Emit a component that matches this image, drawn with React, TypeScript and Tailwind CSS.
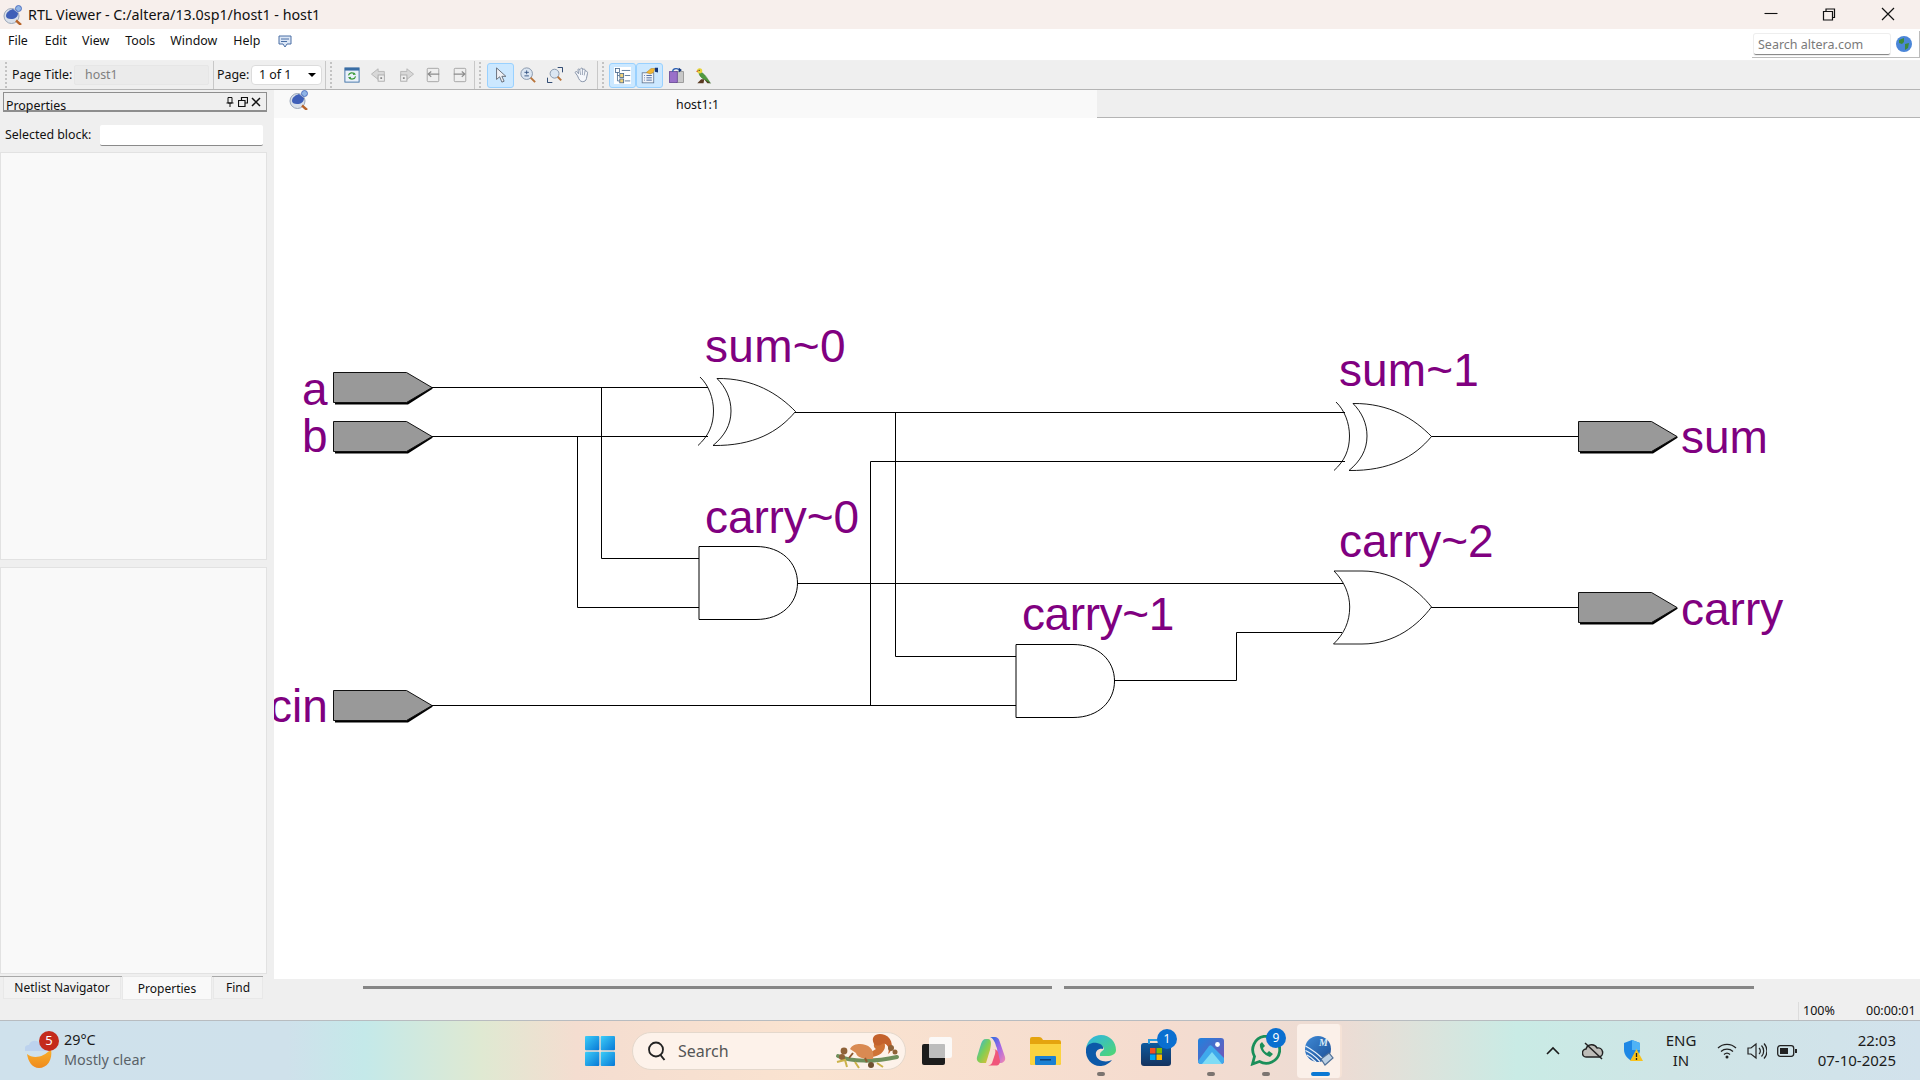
import React from "react";

const P = "#800080";

function Pin({ x, y }: { x: number; y: number }) {
  return (
    <g transform={`translate(${x} ${y})`}>
      <path d="M2 30H74L100 16L98 15L74 28H2V32.5H75L100 16.5Z" fill="#000" />
      <path d="M0.5 0.5H73.5L99 15.5L73.5 30.5H0.5Z" fill="#999" stroke="#111" strokeWidth="1" />
    </g>
  );
}
function Xor({ dx, dy }: { dx: number; dy: number }) {
  return (
    <g transform={`translate(${dx} ${dy})`} fill="none" stroke="#000" strokeWidth="0.9">
      <path d="M671.5 377C680 385 685 398 685 411C685 425 680 436 669.5 445.5" />
      <path d="M688.5 378.5C697 387 702.5 398 702.5 411C702.5 425 696 436 684.5 445.5C725 446 750 432 767 411.5C750 394 725 378 688.5 378.5Z" fill="#fff" />
    </g>
  );
}
function And({ dx, dy }: { dx: number; dy: number }) {
  return (
    <path transform={`translate(${dx} ${dy})`} d="M671 546.5H728C754 546.5 769.5 563 769.5 583C769.5 603 754 619.5 728 619.5H671Z" fill="#fff" stroke="#000" strokeWidth="1" />
  );
}
function Label({ x, y, t, ls = 0 }: { x: number; y: number; t: string; ls?: number }) {
  return (
    <text x={x} y={y} fontFamily="'Liberation Sans', Arial, sans-serif" fontSize="46" fill={P} letterSpacing={ls}>
      {t}
    </text>
  );
}

function Schematic() {
  const wires = [
    "M432 387.5H708", "M432 436.5H708", "M601.5 387.5V558.5H699", "M577.5 436.5V607.5H699",
    "M795 412.5H1345", "M895.5 412.5V656.5H1016", "M870.5 461.5H1345", "M870.5 461.5V705.5",
    "M432 705.5H1016", "M797 583.5H1345", "M1114 680.5H1236.5V632.5H1342", "M1431 436.5H1578", "M1431 607.5H1578",
  ];
  return (
    <svg width="1646" height="861" viewBox="274 118 1646 861" className="block">
      {wires.map((d) => (
        <path key={d} d={d} fill="none" stroke="#000" strokeWidth="1" />
      ))}
      <Pin x={333} y={372} />
      <Pin x={333} y={421} />
      <Pin x={333} y={690} />
      <Pin x={1578} y={421} />
      <Pin x={1578} y={592} />
      <Xor dx={28.5} dy={0} />
      <Xor dx={664.5} dy={25} />
      <And dx={28} dy={0} />
      <And dx={345} dy={98} />
      <path d="M1334 571C1344 581 1349.7 594 1349.7 607C1349.7 622 1344 634 1333.5 644H1362C1395 644 1418 625 1431.5 607C1418 590 1395 571 1362 571Z" fill="#fff" stroke="#000" strokeWidth="0.9" />
      <Label x={705} y={362} t="sum~0" ls={0.3} />
      <Label x={1339} y={386} t="sum~1" ls={0.1} />
      <Label x={705} y={533} t="carry~0" ls={-0.1} />
      <Label x={1339} y={557} t="carry~2" ls={0} />
      <Label x={1022} y={630} t="carry~1" ls={-0.4} />
      <Label x={302} y={405} t="a" />
      <Label x={302} y={452} t="b" />
      <Label x={269} y={722} t="cin" />
      <Label x={1681} y={453} t="sum" />
      <Label x={1681} y={625} t="carry" />
    </svg>
  );
}

function AppIcon({ s = 20 }: { s?: number }) {
  return (
    <svg width={s} height={s} viewBox="0 0 20 20">
      <circle cx="8.5" cy="11" r="7.5" fill="#d9e0ea" stroke="#9aa6b8" />
      <path d="M3 11C3 7 7 5 10 4L15 8C15 12 12 14 8 14C5 14 3 13 3 11Z" fill="#3f5fb8" />
      <circle cx="15.5" cy="3.5" r="3" fill="#8fb4e6" stroke="#3f5fb8" strokeWidth=".8" />
      <path d="M13 15.5L18 20" stroke="#b8642a" strokeWidth="2.4" />
    </svg>
  );
}

function Grip() {
  return (
    <div className="flex w-[4px] flex-col items-center gap-[2px] self-center">
      {[0, 1, 2, 3, 4, 5, 6].map((i) => (
        <div key={i} className="h-[2px] w-[2px] bg-[#c3c3c3]" />
      ))}
    </div>
  );
}
function Divider() {
  return <div className="h-full w-px shrink-0 bg-[#c8c8c8]" />;
}
function Btn({ on, children }: { on?: boolean; children?: React.ReactNode }) {
  return (
    <div className={`flex h-[25px] w-[27px] shrink-0 items-center justify-center rounded-[3px] ${on ? "border border-[#99d1ff] bg-[#cce8ff]" : ""}`}>
      {children}
    </div>
  );
}

function Tool({ k }: { k: string }) {
  const s = { width: 16, height: 16, viewBox: "0 0 18 18" };
  const b = { width: 17, height: 17, viewBox: "0 0 22 22" };
  switch (k) {
    case "refresh":
      return (
        <svg {...s}>
          <rect x="1" y="1" width="16" height="16" fill="#e9f0fa" stroke="#3a6ea5" />
          <rect x="1" y="1" width="16" height="3" fill="#3a6ea5" />
          <path d="M5 9.5A4 4 0 0 1 12 8M13 10.5A4 4 0 0 1 6 12" fill="none" stroke="#3b9a3b" strokeWidth="1.4" />
          <path d="M11 6L13.5 8.5L10 9ZM7 14L4.5 11.5L8 11Z" fill="#3b9a3b" />
        </svg>
      );
    case "back":
      return (
        <svg {...s}>
          <path d="M8 2L0.5 8L8 14V11H15V5H8Z" fill="#d8d8d8" stroke="#b4b4b4" />
          <rect x="8" y="9" width="7" height="7" fill="#efefef" stroke="#aaa" />
          <rect x="10.5" y="11.5" width="2" height="2" fill="#888" />
        </svg>
      );
    case "fwd":
      return (
        <svg {...s}>
          <path d="M10 2L17.5 8L10 14V11H3V5H10Z" fill="#d8d8d8" stroke="#b4b4b4" />
          <rect x="3" y="9" width="7" height="7" fill="#efefef" stroke="#aaa" />
          <rect x="5.5" y="11.5" width="2" height="2" fill="#888" />
        </svg>
      );
    case "pg1":
      return (
        <svg {...s}>
          <rect x="2.5" y="1.5" width="13" height="15" rx="1" fill="#efefef" stroke="#a0a0a0" />
          <path d="M16 8H3.5M7 5L3.5 8L7 11" fill="none" stroke="#8c8c8c" strokeWidth="1.3" />
        </svg>
      );
    case "pg2":
      return (
        <svg {...s}>
          <rect x="2.5" y="1.5" width="13" height="15" rx="1" fill="#efefef" stroke="#a0a0a0" />
          <path d="M2 8H14.5M11 5L14.5 8L11 11" fill="none" stroke="#8c8c8c" strokeWidth="1.3" />
        </svg>
      );
    case "arrow":
      return (
        <svg {...s}>
          <path d="M4 1V14L7.5 11L10 17L12.5 16L10 10.5H14.5Z" fill="#eef0f5" stroke="#5f6670" />
        </svg>
      );
    case "zoom":
      return (
        <svg {...s}>
          <circle cx="7.5" cy="7.5" r="6.5" fill="#dbe6f2" stroke="#7e8fa6" />
          <path d="M5 6H10M7.5 3.8V8.2M5 10H10" stroke="#2f4f80" strokeWidth="1" />
          <path d="M12 12L17 17" stroke="#b9743a" strokeWidth="2.2" />
        </svg>
      );
    case "fit":
      return (
        <svg {...s}>
          <path d="M.5 12V17.5H6M12 .5H17.5V6" fill="none" stroke="#24406b" strokeWidth="1.1" />
          <circle cx="8.5" cy="7.5" r="5" fill="#dbe6f2" stroke="#7e8fa6" />
          <path d="M12 11L16 15" stroke="#b9743a" strokeWidth="2.2" />
        </svg>
      );
    case "hand":
      return (
        <svg {...s}>
          <path d="M4 10L1.5 6.5C1 5 3 4.5 4 6L5 7.5L4.5 3C4.5 1.8 6.3 1.8 6.5 3L7.5 2C8 .8 9.6 1 9.5 2.2L11 2.5C12 2.2 12.6 3 12.4 4L14 4.8C15 5 15.5 6 15.2 7L14 13C13.4 15.5 12 16.5 9.5 16.5C7 16.5 5.5 14 4 10Z" fill="#f5f7fb" stroke="#7c8aa0" />
          <path d="M6.5 3L7.5 9M9.5 2.2V9M12.4 4L11.5 9.5" stroke="#7c8aa0" strokeWidth=".8" />
        </svg>
      );
    case "tree":
      return (
        <svg {...b}>
          <rect width="22" height="22" fill="#fff" />
          <rect x="2" y="2" width="5" height="5" fill="#fff" stroke="#3d5f86" />
          <rect x="7.5" y="8.5" width="5" height="5" fill="#f1d27a" stroke="#3d5f86" />
          <rect x="7.5" y="15.5" width="5" height="5" fill="#f1d27a" stroke="#3d5f86" />
          <path d="M4.5 7V18H7M4.5 11H7M10 4.5H21M14 11H21M14 18H21" stroke="#3d5f86" fill="none" />
        </svg>
      );
    case "prop":
      return (
        <svg {...b}>
          <rect x="1.5" y="7.5" width="15" height="13" fill="#f0f3f8" stroke="#5b6f8c" />
          <path d="M4 11H5M7 11H14M4 14H5M7 14H14M4 17H5M7 17H14" stroke="#24498a" />
          <path d="M7 7L13 2H18L16 7L12 9Z" fill="#f2b632" stroke="#a9791a" strokeWidth=".6" />
          <path d="M18 1L22 1V7L18 6Z" fill="#14367a" />
        </svg>
      );
    case "copy":
      return (
        <svg {...b}>
          <rect x="11" y="6" width="9" height="14" fill="#c8c8c8" stroke="#8a8a8a" />
          <rect x="2" y="6" width="10" height="14" fill="#9a70c9" stroke="#5f3d8f" />
          <path d="M6 6C6 1 14 1 15 5" fill="none" stroke="#2b5fb3" strokeWidth="1.5" />
          <path d="M18 4L14 1V7Z" fill="#14367a" />
        </svg>
      );
    default:
      return (
        <svg {...b}>
          <path d="M3 21L8 16H12L11 21Z" fill="#5a3a22" />
          <path d="M16 21L12 16L16 16L20 21Z" fill="#5a3a22" />
          <path d="M5 6C8 6 13 9 18 18L20 21L12 16C8 14 5 11 5 6Z" fill="#4f9b3e" stroke="#2e6b25" strokeWidth=".6" />
          <circle cx="6" cy="5" r="3.4" fill="#e7d43a" />
          <path d="M3 4L1.5 6L4 6.5Z" fill="#d95a2a" />
          <circle cx="5.4" cy="4.4" r=".7" fill="#222" />
        </svg>
      );
  }
}

function Toolbar() {
  return (
    <div className="flex h-[30px] shrink-0 items-center border-t border-b border-t-[#f0f0f0] border-b-[#b4b4b4] bg-[#efefef] text-[12.4px] text-[#111]">
      <div className="ml-[4px]"><Grip /></div>
      <span className="ml-[4px] w-[62px]">Page Title:</span>
      <div className="flex h-[20px] w-[135px] items-center rounded-[2px] border border-[#e6e6e6] bg-[#ebebeb] pl-[10px] text-[#808080]">host1</div>
      <div className="ml-[4px] h-full"><Divider /></div>
      <span className="ml-[3px] w-[34px]">Page:</span>
      <div className="flex h-[20px] w-[71px] items-center justify-between rounded-[4px] border border-[#dcdcdc] bg-white pl-[7px] pr-[5px]">
        <span>1 of 1</span>
        <div className="h-0 w-0 border-x-[4px] border-t-[4px] border-x-transparent border-t-black" />
      </div>
      <div className="ml-[3px] h-full"><Divider /></div>
      <div className="ml-[3px]"><Grip /></div>
      <div className="ml-[5px] flex items-center">
        <Btn><Tool k="refresh" /></Btn>
        <Btn><Tool k="back" /></Btn>
        <Btn><Tool k="fwd" /></Btn>
        <Btn><Tool k="pg1" /></Btn>
        <Btn><Tool k="pg2" /></Btn>
      </div>
      <div className="ml-[1px] h-full"><Divider /></div>
      <div className="ml-[3px]"><Grip /></div>
      <div className="ml-[5px] flex items-center">
        <Btn on><Tool k="arrow" /></Btn>
        <Btn><Tool k="zoom" /></Btn>
        <Btn><Tool k="fit" /></Btn>
        <Btn><Tool k="hand" /></Btn>
      </div>
      <div className="ml-[2px] h-full"><Divider /></div>
      <div className="ml-[3px]"><Grip /></div>
      <div className="ml-[4px] flex items-center">
        <Btn on><Tool k="tree" /></Btn>
        <Btn on><Tool k="prop" /></Btn>
        <Btn><Tool k="copy" /></Btn>
        <Btn><Tool k="bird" /></Btn>
      </div>
    </div>
  );
}

function LeftPanel() {
  return (
    <div className="flex h-full w-[274px] shrink-0 flex-col bg-[#efefef] text-[12.4px] text-[#111]">
      <div className="ml-[3px] mt-[2px] flex h-[20px] w-[264px] shrink-0 items-end justify-between border border-b-2 border-[#8e8e8e] pl-[2px] pr-[5px]">
        <span className="translate-y-[3px] leading-[15px]">Properties</span>
        <div className="mb-[3px] flex items-center gap-[3px]">
          <svg width="10" height="10" viewBox="0 0 10 10"><path d="M3 .5H7V6H3ZM1.5 6H8.5M5 6V10" fill="none" stroke="#111" /></svg>
          <svg width="10" height="10" viewBox="0 0 10 10"><path d="M3.5 3V.5H9.5V6H7M.5 3.5H7V9.5H.5Z" fill="none" stroke="#111" strokeWidth="1.2" /></svg>
          <svg width="10" height="10" viewBox="0 0 10 10"><path d="M1 1L9 9M9 1L1 9" fill="none" stroke="#111" strokeWidth="1.5" /></svg>
        </div>
      </div>
      <div className="mt-[13px] flex h-[21px] shrink-0 items-center pl-[5px]">
        <span className="w-[95px]">Selected block:</span>
        <div className="h-[21px] w-[163px] rounded-[2px] border-b border-b-[#8a8a8a] bg-white" />
      </div>
      <div className="mt-[6px] h-[408px] w-[267px] shrink-0 border border-[#e2e2e2] bg-[#f9f9f9]" />
      <div className="mt-[7px] h-[407px] w-[267px] shrink-0 border border-[#e2e2e2] bg-[#f9f9f9]" />
      <div className="mt-[2px] flex h-[23px] w-[263px] shrink-0 items-start border-t border-t-[#a8a8a8] pl-[3px] text-[12px]">
        <div className="flex h-[22px] w-[118px] items-center justify-center border-x border-b border-[#e8e8e8] bg-[#f2f2f2]">Netlist Navigator</div>
        <div className="-mt-[1px] ml-[1px] flex h-[24px] w-[90px] items-center justify-center border border-[#e8e8e8] bg-[#f9f9f9] pt-[1px]">Properties</div>
        <div className="ml-[1px] flex h-[22px] w-[50px] items-center justify-center border-x border-b border-[#e8e8e8] bg-[#f2f2f2]">Find</div>
      </div>
    </div>
  );
}

function Win() {
  return (
    <svg width="30" height="30" viewBox="0 0 30 30">
      <defs>
        <linearGradient id="w" x1="0" y1="0" x2="1" y2="1">
          <stop offset="0" stopColor="#3ccdf8" />
          <stop offset="1" stopColor="#0878d6" />
        </linearGradient>
      </defs>
      <rect x="0" y="0" width="14.3" height="14.3" rx="1" fill="url(#w)" />
      <rect x="15.7" y="0" width="14.3" height="14.3" rx="1" fill="url(#w)" />
      <rect x="0" y="15.7" width="14.3" height="14.3" rx="1" fill="url(#w)" />
      <rect x="15.7" y="15.7" width="14.3" height="14.3" rx="1" fill="url(#w)" />
    </svg>
  );
}

function Badge({ n, className }: { n: string; className: string }) {
  return (
    <div className={`absolute flex h-[20px] w-[20px] items-center justify-center rounded-full text-[12px] text-white ${className}`}>{n}</div>
  );
}
function Dot() {
  return <div className="absolute bottom-[4px] left-1/2 h-[4px] w-[8px] -translate-x-1/2 rounded-full bg-[#7b7470]" />;
}
function Slot({ w, children, ml }: { w: string; children?: React.ReactNode; ml: string }) {
  return <div className={`relative flex h-full items-center justify-center ${w} ${ml}`}>{children}</div>;
}

function Taskbar() {
  return (
    <div className="flex h-[60px] shrink-0 items-center border-t border-t-[#b8bcc0] bg-[linear-gradient(90deg,#cfe1ec_0%,#cfe1eb_15%,#c4e9e9_19%,#dfe9d2_25%,#f4ddd0_30%,#fae3d0_42%,#f5dccf_60%,#ecdcd4_70%,#c9ebe5_79%,#cfe5e6_87%,#d2e2ec_100%)] text-[#1b1b1b]" style={{ fontFamily: "'Noto Sans', sans-serif" }}>
      <div className="relative ml-[25px] h-[34px] w-[30px]">
        <svg width="30" height="34" viewBox="0 0 30 34" className="absolute left-0 top-[2px]">
          <defs><linearGradient id="mn" x1="0" y1="0" x2="0" y2="1"><stop offset="0" stopColor="#f9b12a" /><stop offset="1" stopColor="#ef8a1e" /></linearGradient></defs>
          <path d="M2 18C8 23 18 22 26 13C28 24 22 32 14 32C7 32 3 25 2 18Z" fill="url(#mn)" />
          <path d="M0 15A4 4 0 0 1 4 9A6 6 0 0 1 15 8A4 4 0 0 1 20 15Z" fill="#bcd2ee" />
        </svg>
        <Badge n="5" className="left-[14px] -top-[3px] bg-[#c42b1c] text-[13px]" />
      </div>
      <div className="ml-[9px] flex w-[110px] -translate-y-[1px] flex-col text-[14.4px] leading-[20px]">
        <span>29°C</span>
        <span className="text-[#5a6268]">Mostly clear</span>
      </div>
      <div className="ml-[411px] flex h-full items-center">
        <Win />
        <div className="ml-[17px] flex h-[38px] w-[274px] items-center rounded-full border border-[#e4d8cc] bg-[#fdf2ea] pl-[13px]">
          <svg width="22" height="22" viewBox="0 0 22 22"><circle cx="10" cy="9.5" r="7" fill="none" stroke="#222" strokeWidth="1.8" /><path d="M14.5 15L18.5 20" stroke="#222" strokeWidth="2" /></svg>
          <span className="ml-[10px] text-[16px] text-[#555]">Search</span>
          <svg width="66" height="38" viewBox="0 0 66 38" className="ml-[106px] shrink-0">
            <path d="M3 24C16 30 40 30 62 25" fill="none" stroke="#6f8f5c" strokeWidth="4" strokeLinecap="round" />
            <path d="M37 25C44 24 50 20 50 14C50 8 46 7 42 9C38 11 38 15 41 17L36 20Z" fill="#cf7336" />
            <path d="M39 12C35 4 42 0 50 3C58 6 59 18 53 22C56 15 50 10 47 12C44 14 42 14 39 12Z" fill="#c4622c" />
            <path d="M36 27C27 27 22 25 21 21L15 17C17 13 21 12 25 12C33 12 40 17 38 27Z" fill="#d98a52" />
            <path d="M18 21L14 26M30 26L32 30" stroke="#8f5a30" strokeWidth="2" />
            <circle cx="9" cy="19" r="3.4" fill="#8f6238" /><circle cx="7" cy="25" r="3" fill="#8f6238" /><circle cx="56" cy="16" r="3" fill="#8f6238" /><circle cx="60" cy="20" r="2.5" fill="#8f6238" /><circle cx="36" cy="33" r="3" fill="#6f5130" />
            <path d="M2 30L10 28L12 35M20 30L24 36M42 31L48 35" stroke="#cbb24a" strokeWidth="2" fill="none" />
          </svg>
        </div>
        <Slot w="w-[30px]" ml="ml-[16px]">
          <svg width="30" height="28" viewBox="0 0 30 28"><rect x="0" y="7" width="23" height="21" rx="2" fill="#1c1c1c" /><rect x="7" y="0" width="23" height="21" rx="2" fill="#fbfbfb" fillOpacity=".92" /><rect x="7" y="7" width="16" height="14" rx="1" fill="#bdbdbd" /></svg>
        </Slot>
        <Slot w="w-[30px]" ml="ml-[24px]">
          <svg width="30" height="30" viewBox="0 0 30 30">
            <defs>
              <linearGradient id="c1" x1="0" y1="0" x2="1" y2="1"><stop offset="0" stopColor="#1f6fe0" /><stop offset=".5" stopColor="#a065e8" /><stop offset="1" stopColor="#f58ab0" /></linearGradient>
              <linearGradient id="c2" x1="0" y1="0" x2="1" y2="1"><stop offset="0" stopColor="#26b5ee" /><stop offset=".5" stopColor="#7fce55" /><stop offset="1" stopColor="#f7b92c" /></linearGradient>
            </defs>
            <path d="M14 1H19C21 1 22.5 2 23.5 5L29 21C30 25 27 27 24 27H19C20 22 23 15 20 10C19 6 17 2 14 1Z" fill="url(#c1)" />
            <path d="M10 3C7 3 6 5 5 8L1 21C0 25 3 27 6 27H10L14 14C15 9 16 3 12 3Z" fill="url(#c2)" />
            <path d="M17 13C19 13 20 14 19 18L16 27C15 29 13 29.5 10 29.5H21C23 29.5 24 27 24 25L22 16C21 14 19 13 17 13Z" fill="#f0567a" />
          </svg>
        </Slot>
        <Slot w="w-[31px]" ml="ml-[24px]">
          <svg width="31" height="28" viewBox="0 0 31 28"><path d="M0 2Q0 0 2 0H9C11 0 12 1 13 3H29Q31 3 31 5V26Q31 28 29 28H2Q0 28 0 26Z" fill="#e5a40f" /><path d="M0 7H31V26Q31 28 29 28H2Q0 28 0 26Z" fill="#fbd33f" /><rect x="5" y="19" width="21" height="9" rx="1" fill="#1b80d2" /><rect x="10" y="22" width="11" height="1.5" fill="#0d3f75" /></svg>
        </Slot>
        <Slot w="w-[31px]" ml="ml-[24px]">
          <svg width="31" height="31" viewBox="0 0 31 31">
            <defs><linearGradient id="e" x1="0" y1="0" x2="1" y2="1"><stop offset="0" stopColor="#2cb2ea" /><stop offset="1" stopColor="#52d86e" /></linearGradient></defs>
            <path d="M1 14C2 5 9 0 16 0C25 0 31 7 31 15C31 19 27 21 22 21H15C14 17 18 16 19 14C19 11 15 9 10 9C5 9 2 11 1 14Z" fill="url(#e)" />
            <path d="M1 14C2 9 7 7 12 8C17 9 19 12 18 14C14 13 10 16 11 20C12 26 21 28 27 25C23 30 18 31 15 31C7 31 0 24 1 14Z" fill="#0c59a8" />
          </svg>
          <Dot />
        </Slot>
        <Slot w="w-[31px]" ml="ml-[24px]">
          <svg width="30" height="28" viewBox="0 0 30 28" className="mt-[3px]">
            <defs><linearGradient id="st" x1="0" y1="0" x2="0" y2="1"><stop offset="0" stopColor="#0f5a9e" /><stop offset="1" stopColor="#14335f" /></linearGradient></defs>
            <rect x="0" y="5" width="30" height="23" rx="3" fill="url(#st)" />
            <path d="M8 6V2H19V6" fill="none" stroke="#2a9ce0" strokeWidth="2" />
            <rect x="9" y="10" width="5.5" height="5.5" fill="#f25022" /><rect x="15.5" y="10" width="5.5" height="5.5" fill="#7fba00" /><rect x="9" y="16.5" width="5.5" height="5.5" fill="#00a4ef" /><rect x="15.5" y="16.5" width="5.5" height="5.5" fill="#ffb900" />
          </svg>
          <Badge n="1" className="left-[17px] top-[8px] bg-[#0a6fd0]" />
        </Slot>
        <Slot w="w-[26px]" ml="ml-[27px]">
          <svg width="26" height="26" viewBox="0 0 26 26">
            <defs><linearGradient id="p" x1="0" y1="0" x2="1" y2="1"><stop offset="0" stopColor="#1f82de" /><stop offset="1" stopColor="#7a52b4" /></linearGradient></defs>
            <rect width="26" height="26" rx="3" fill="url(#p)" />
            <path d="M0 23L11 8C12 7 13 7 14 8L26 20V23Q26 26 23 26H3Q0 26 0 23Z" fill="#3fa9ec" />
            <path d="M4 26L14 14L24 26Z" fill="#7fdcf5" />
            <circle cx="19.5" cy="6.5" r="2.4" fill="#fff" />
          </svg>
          <Dot />
        </Slot>
        <Slot w="w-[31px]" ml="ml-[26px]">
          <svg width="31" height="31" viewBox="0 0 31 31">
            <path d="M2.5 29L4.5 21.5A13.5 13.5 0 1 1 9.5 26.5Z" fill="none" stroke="#1a8f5a" strokeWidth="2.8" />
            <path d="M10 9C9 13 13 20 20 22L23 19L19 16L17 18C15 17 13.5 15 13 13L15 11L12 7Z" fill="#1a8f5a" />
          </svg>
          <Badge n="9" className="left-[16px] top-[7px] bg-[#0a6fd0]" />
          <Dot />
        </Slot>
        <div className="relative ml-[16px] flex h-[54px] w-[45px] items-center justify-center rounded-[4px] border-r-2 border-r-[#f5e2d6] bg-[#fbf0e9]">
          <svg width="30" height="32" viewBox="0 0 30 32">
            <defs><linearGradient id="q" x1="0" y1="0" x2="1" y2="1"><stop offset="0" stopColor="#3f8ad6" /><stop offset="1" stopColor="#1d4f96" /></linearGradient></defs>
            <circle cx="14" cy="14" r="13" fill="url(#q)" />
            <path d="M1.5 11C7 14 13 18 20 25M1.5 15.5C6 17.5 11 21 16 26.5M3 20C6 21.5 9 24 12 27" stroke="#e8f1fa" strokeWidth="1.3" fill="none" />
            <text x="15" y="11" fontSize="10" fontStyle="italic" fontWeight="700" fontFamily="'Liberation Serif', serif" fill="#dcebf8">M</text>
            <path d="M17 24L25 18L29 23L21 30Z" fill="#bcd0e4" stroke="#4e6f96" strokeWidth="1.2" />
          </svg>
          <div className="absolute bottom-[2px] left-[14px] h-[4px] w-[19px] rounded-full bg-[#0a78d4]" />
        </div>
      </div>
      <div className="ml-[204px] flex h-full items-center">
        <svg width="14" height="10" viewBox="0 0 14 10"><path d="M1 8L7 2L13 8" fill="none" stroke="#1b1b1b" strokeWidth="1.6" /></svg>
        <svg width="22" height="18" viewBox="0 0 22 18" className="ml-[22px]"><path d="M5 15A4 4 0 0 1 4 7A6 6 0 0 1 15 6A4.5 4.5 0 0 1 17 15Z" fill="#bdbdb8" stroke="#222" strokeWidth="1.5" /><path d="M3 1L20 17" stroke="#222" strokeWidth="1.5" /></svg>
        <svg width="20" height="22" viewBox="0 0 20 22" className="ml-[19px]"><path d="M1 3L9 0L17 3V10C17 15 13 19 9 21C5 19 1 15 1 10Z" fill="#1e88e5" /><path d="M9 0L17 3V10H9Z" fill="#4fb3f6" /><path d="M13.5 9L20 21H7Z" fill="#f8c21c" /><path d="M13.5 13V17M13.5 18V20" stroke="#222" strokeWidth="1.3" /></svg>
        <div className="ml-[23px] flex w-[30px] -translate-y-[1px] flex-col items-center text-[15px] leading-[20px]">
          <span>ENG</span>
          <span>IN</span>
        </div>
        <svg width="20" height="16" viewBox="0 0 20 16" className="ml-[21px]"><path d="M1 5A13 13 0 0 1 19 5M4 8.5A9 9 0 0 1 16 8.5M7 11.5A4.5 4.5 0 0 1 13 11.5" fill="none" stroke="#222" strokeWidth="1.3" /><circle cx="10" cy="14" r="1.5" fill="#222" /></svg>
        <svg width="20" height="18" viewBox="0 0 20 18" className="ml-[10px]"><path d="M1 6H4L9 2V16L4 12H1Z" fill="none" stroke="#222" strokeWidth="1.2" /><path d="M12 6A4 4 0 0 1 12 12M14.5 3.5A8 8 0 0 1 14.5 14.5M17 1.5A11 11 0 0 1 17 16.5" fill="none" stroke="#222" strokeWidth="1.2" /></svg>
        <svg width="20" height="12" viewBox="0 0 20 12" className="ml-[10px]"><rect x=".7" y=".7" width="16" height="10.6" rx="2.5" fill="none" stroke="#222" strokeWidth="1.3" /><rect x="3" y="3" width="8" height="6" fill="#222" /><rect x="18" y="4" width="2" height="4" fill="#222" /></svg>
        <div className="ml-[21px] flex w-[78px] -translate-y-[1px] flex-col items-end whitespace-nowrap text-[15px] leading-[20px]">
          <span>22:03</span>
          <span>07-10-2025</span>
        </div>
      </div>
    </div>
  );
}

export default function App() {
  return (
    <div className="flex h-[1080px] w-[1920px] flex-col overflow-hidden bg-white" style={{ fontFamily: "'Noto Sans', sans-serif" }}>
      <div className="flex h-[29px] shrink-0 items-center bg-[#f7efec] pl-[3px] text-[14.3px] text-[#111]">
        <AppIcon />
        <span className="ml-[5px]">RTL Viewer - C:/altera/13.0sp1/host1 - host1</span>
        <div className="ml-auto flex h-full items-center">
          <svg width="58" height="29" viewBox="0 0 58 29"><path d="M20.5 13.5H33.5" stroke="#111" strokeWidth="1.1" /></svg>
          <svg width="58" height="29" viewBox="0 0 58 29"><path d="M21.5 11.5H30.5V20H21.5ZM24 11V9H32.5V17.5H31" fill="none" stroke="#111" strokeWidth="1.2" /></svg>
          <svg width="60" height="29" viewBox="0 0 60 29"><path d="M22 8L34 20M34 8L22 20" fill="none" stroke="#111" strokeWidth="1.2" /></svg>
        </div>
      </div>
      <div className="flex h-[31px] shrink-0 items-center bg-white text-[12.4px] text-[#111]">
        <span className="ml-[8px] -translate-y-[3px]">File</span>
        <span className="ml-[17px] -translate-y-[3px]">Edit</span>
        <span className="ml-[15px] -translate-y-[3px]">View</span>
        <span className="ml-[16px] -translate-y-[3px]">Tools</span>
        <span className="ml-[15px] -translate-y-[3px]">Window</span>
        <span className="ml-[16px] -translate-y-[3px]">Help</span>
        <svg width="14" height="14" viewBox="0 0 14 14" className="ml-[18px] -mt-[6px]"><path d="M1 1H13V9H9L7 12L5 9H1Z" fill="#dbe6f5" stroke="#4a6fa5" /><path d="M3 4H11M3 6.5H9" stroke="#4a6fa5" /></svg>
        <div className="ml-auto mr-0 flex h-[27px] w-[168px] items-center border-b border-r border-[#bcbcbc] pl-[2px]">
          <div className="flex h-[21px] w-[136px] items-center rounded-[2px] border-b border-b-[#8a8a8a] pl-[4px] pt-[3px] text-[12.5px] text-[#7a7a7a] shadow-[0_0_0_1px_#eee]">Search altera.com</div>
          <svg width="16" height="16" viewBox="0 0 16 16" className="ml-[6px]"><circle cx="8" cy="8" r="8" fill="#4a86d8" /><path d="M3 4L8 2L8 6L6 8L3 7ZM9 8L13 7L12 12L9 14Z" fill="#3c8a3c" /></svg>
        </div>
      </div>
      <Toolbar />
      <div className="flex h-[910px] shrink-0">
        <LeftPanel />
        <div className="flex min-w-0 flex-1 flex-col">
          <div className="flex h-[28px] shrink-0 items-stretch">
            <div className="relative flex w-[823px] items-center justify-center bg-[#f9f9f9] pl-[24px] pt-[2px] text-[12.4px] text-[#111]">
              <div className="absolute left-[15px] top-[0px]"><AppIcon /></div>
              host1:1
            </div>
            <div className="flex-1 border-b border-b-[#b4b4b4] bg-[#efefef]" />
          </div>
          <div className="h-[861px] shrink-0 overflow-hidden bg-white">
            <Schematic />
          </div>
          <div className="flex h-[21px] shrink-0 items-start bg-[#efefef] pl-[89px] pt-[7px]">
            <div className="h-[3px] w-[689px] bg-[#868686]" />
            <div className="ml-[12px] h-[3px] w-[690px] bg-[#868686]" />
          </div>
        </div>
      </div>
      <div className="flex h-[20px] shrink-0 items-center bg-[#efefef] pt-[2px] text-[12.5px] text-[#111]">
        <div className="ml-auto flex h-full items-center border-l border-l-[#dcdcdc] pl-[4px]">
          <span className="w-[63px]">100%</span>
          <span className="w-[54px]">00:00:01</span>
        </div>
      </div>
      <Taskbar />
    </div>
  );
}
